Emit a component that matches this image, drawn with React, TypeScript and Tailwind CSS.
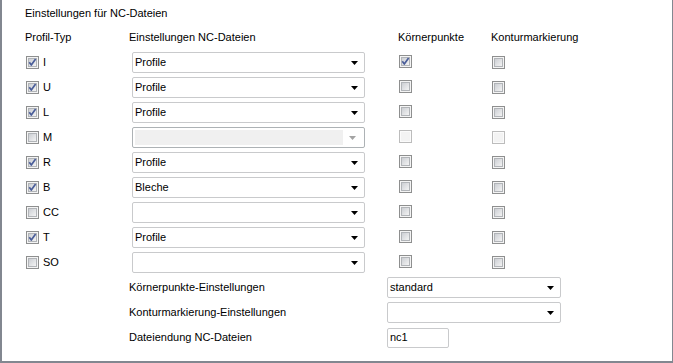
import { useId } from 'react'

type Row = {
  label: string
  on: boolean
  value: string
  disabled?: boolean
  koerner?: boolean
}

const ROWS: Row[] = [
  { label: 'I', on: true, value: 'Profile', koerner: true },
  { label: 'U', on: true, value: 'Profile' },
  { label: 'L', on: true, value: 'Profile' },
  { label: 'M', on: false, value: '', disabled: true },
  { label: 'R', on: true, value: 'Profile' },
  { label: 'B', on: true, value: 'Bleche' },
  { label: 'CC', on: false, value: '' },
  { label: 'T', on: true, value: 'Profile' },
  { label: 'SO', on: false, value: '' },
]

function CheckBox({ checked = false, disabled = false }: { checked?: boolean; disabled?: boolean }) {
  const id = useId()
  if (disabled) {
    return (
      <svg width="13" height="13" viewBox="0 0 13 13" className="shrink-0 block">
        <rect x="0.5" y="0.5" width="12" height="12" fill="#fbfbfb" stroke="#bcbcbc" />
        <rect x="2" y="2" width="9" height="9" fill="#f3f3f3" />
      </svg>
    )
  }
  return (
    <svg width="13" height="13" viewBox="0 0 13 13" className="shrink-0 block">
      <defs>
        <linearGradient id={id} x1="0" y1="0" x2="1" y2="1">
          <stop offset="0" stopColor="#c9ccd1" />
          <stop offset="1" stopColor="#f6f6f6" />
        </linearGradient>
      </defs>
      <rect x="0.5" y="0.5" width="12" height="12" fill="#f4f4f4" stroke="#8e8f8f" />
      <rect x="2.5" y="2.5" width="8" height="8" fill={`url(#${id})`} stroke="#b1b4b8" />
      {checked && (
        <path d="M3.3 6.3 L5.3 9 L9.6 3" fill="none" stroke="#4a5d99" strokeWidth="1.7" strokeLinejoin="round" />
      )}
    </svg>
  )
}

function Arrow({ disabled = false }: { disabled?: boolean }) {
  return (
    <svg width="7" height="4" viewBox="0 0 7 4" className="block">
      <path d="M0 0 H7 L3.5 4 Z" fill={disabled ? '#a3a3a3' : '#000'} />
    </svg>
  )
}

function Combo({ value, width, disabled = false }: { value: string; width: string; disabled?: boolean }) {
  return (
    <div
      className={`${width} h-[21px] flex items-center rounded-[2px] border ${
        disabled ? 'border-[#adb2b5] bg-white p-[2px]' : 'border-[#c9cacc] bg-white'
      }`}
    >
      {disabled ? (
        <div className="flex-1 h-full bg-[#f0f0f0]" />
      ) : (
        <span className="flex-1 pl-[2px] text-black truncate">{value}</span>
      )}
      <div className={`w-[19px] flex justify-center ${disabled ? '' : 'pr-px'}`}>
        <Arrow disabled={disabled} />
      </div>
    </div>
  )
}

export default function App() {
  return (
    <div className="w-[673px] h-[363px] bg-white border-l-2 border-r border-b-2 border-[#828790] font-['Liberation_Sans',Arial,sans-serif] text-[11px] text-black leading-none overflow-hidden">
      <div className="pl-[23px]">
        <div className="h-[25px] flex items-center pt-px">Einstellungen für NC-Dateien</div>

        <div className="h-[25px] flex items-center">
          <div className="w-[104px]">Profil-Typ</div>
          <div className="w-[269px]">Einstellungen NC-Dateien</div>
          <div className="w-[93px]">Körnerpunkte</div>
          <div>Konturmarkierung</div>
        </div>

        {ROWS.map(r => (
          <div key={r.label} className="h-[25px] flex items-center">
            <div className="w-[107px] flex items-center gap-[4px] pl-px">
              <CheckBox checked={r.on} />
              <span>{r.label}</span>
            </div>
            <Combo value={r.value} width="w-[233px]" disabled={r.disabled} />
            <div className="ml-[34px] -mt-[2px]">
              <CheckBox checked={r.koerner} disabled={r.disabled} />
            </div>
            <div className="ml-[80px]">
              <CheckBox disabled={r.disabled} />
            </div>
          </div>
        ))}

        <div className="pl-[104px]">
          <div className="h-[25px] flex items-center">
            <div className="w-[258px]">Körnerpunkte-Einstellungen</div>
            <Combo value="standard" width="w-[174px]" />
          </div>
          <div className="h-[25px] flex items-center">
            <div className="w-[258px]">Konturmarkierung-Einstellungen</div>
            <Combo value="" width="w-[174px]" />
          </div>
          <div className="h-[25px] flex items-center">
            <div className="w-[258px]">Dateiendung NC-Dateien</div>
            <div className="w-[62px] h-[20px] flex items-center rounded-[2px] border border-[#c9cacc] pl-[2px]">nc1</div>
          </div>
        </div>
      </div>
    </div>
  )
}
